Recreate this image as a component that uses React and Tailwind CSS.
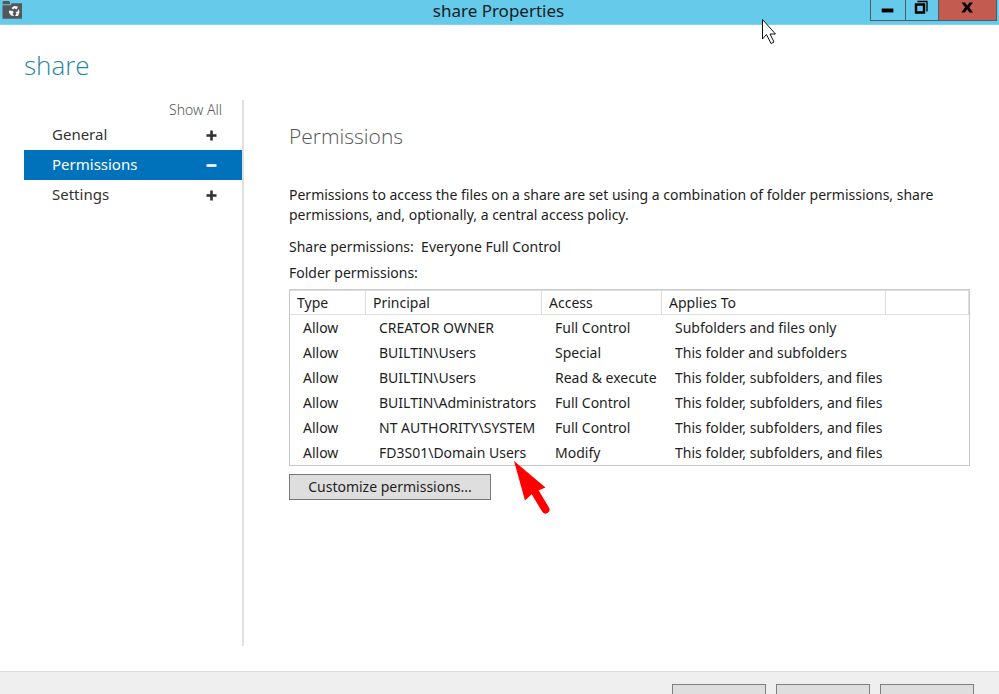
const sections = [
  { name: "General", open: false },
  { name: "Permissions", open: true },
  { name: "Settings", open: false },
];

const rows = [
  ["Allow", "CREATOR OWNER", "Full Control", "Subfolders and files only"],
  ["Allow", "BUILTIN\\Users", "Special", "This folder and subfolders"],
  ["Allow", "BUILTIN\\Users", "Read & execute", "This folder, subfolders, and files"],
  ["Allow", "BUILTIN\\Administrators", "Full Control", "This folder, subfolders, and files"],
  ["Allow", "NT AUTHORITY\\SYSTEM", "Full Control", "This folder, subfolders, and files"],
  ["Allow", "FD3S01\\Domain Users", "Modify", "This folder, subfolders, and files"],
];

function FolderIcon() {
  return (
    <svg width="20" height="19" viewBox="0 0 20 19" aria-hidden="true">
      <path d="M.5 2 1.500 1H7l1 1v2.200H.5z" fill="#55585b" />
      <path d="M.5 5.200h8L9.800 3.200H20v15.600H.5z" fill="#55585b" />
      <path d="m9.500 8 2.500-2 4 .5-1.500 3-2-1.300L11 9.500zM16.500 9l1 3-1.500 4h-3l1.500-2.500-1-1.500 2-.5zM7 10.500l4 .5.5 2-1 .3 1.500 2.700-3-.5L7 12.500z" fill="#f4f6f7" />
    </svg>
  );
}

function ToggleIcon({ open }) {
  return (
    <svg width="11" height="11" viewBox="0 0 11 11" fill="currentColor" aria-hidden="true">
      <path d="M.5 4.200h10v2.600H.5z" />
      {!open && <path d="M4.200.5h2.600v10H4.200z" />}
    </svg>
  );
}

function TitleBar() {
  return (
    <header className="grid h-[25px] shrink-0 grid-cols-[1fr_auto_1fr] items-start border-b border-[#83d4ee] bg-[#66caea] pr-[2px]">
      <div className="pl-[2px]">
        <FolderIcon />
      </div>
      <h1 className="text-[17px] leading-[22px] text-[#111c22]">share Properties</h1>
      <div className="flex h-[21px] justify-self-end border border-t-0 border-[#4a5f69]">
        <button type="button" aria-label="Minimize" className="flex w-[35px] justify-center border-r border-[#4a5f69]">
          <svg width="35" height="20" viewBox="0 0 35 20"><path d="M11 8.500h12v4H11z" fill="#000" /></svg>
        </button>
        <button type="button" aria-label="Restore" className="flex w-[33px] justify-center border-r border-[#4a5f69]">
          <svg width="32" height="20" viewBox="0 0 32 20" fill="none" stroke="#000">
            <path d="M10 4.500h8v8h-8z" strokeWidth="2.400" />
            <path d="M11.500 1.500h9.500V11.500" strokeWidth="1.300" />
          </svg>
        </button>
        <button type="button" aria-label="Close" className="flex w-[57px] justify-center bg-[#c45b50]">
          <svg width="57" height="20" viewBox="0 0 57 20"><path d="M22.500 2.500H26l2.200 3 2.300-3H34l-3.700 4.800L34 12.500h-3.600l-2.200-3.300-2.300 3.300h-3.600l3.800-5.200z" fill="#000" /></svg>
        </button>
      </div>
    </header>
  );
}

function Sidebar() {
  return (
    <nav className="flex w-[220px] shrink-0 flex-col border-r-2 border-[#e0e0e0]">
      <button type="button" className="mr-5 self-end text-sm leading-5 font-light text-[#555]">Show All</button>
      {sections.map((s) => (
        <button
          key={s.name}
          type="button"
          aria-expanded={s.open}
          className={
            s.open
              ? "flex h-[30px] items-center justify-between bg-[#0072bc] pr-[25px] pl-7 text-[15px] text-white"
              : "flex h-[30px] items-center justify-between pr-[25px] pl-7 text-[15px] text-[#333]"
          }
        >
          {s.name}
          <ToggleIcon open={s.open} />
        </button>
      ))}
    </nav>
  );
}

function PermissionsTable() {
  return (
    <div className="border border-[#c8c8c8]">
      <table className="w-full table-fixed border-separate border-spacing-0 text-left">
        <colgroup>
          <col className="w-[76px]" />
          <col className="w-[176px]" />
          <col className="w-[120px]" />
          <col className="w-[224px]" />
          <col />
        </colgroup>
        <thead>
          <tr className="h-[25px]">
            {["Type", "Principal", "Access", "Applies To", ""].map((h) => (
              <th key={h} className="border-t border-r border-b border-[#dedede] p-0 pl-[7px] font-normal">{h}</th>
            ))}
          </tr>
        </thead>
        <tbody>
          {rows.map((r, i) => (
            <tr key={i} className="h-[25px]">
              {r.map((c, j) => (
                <td key={j} className="p-0 pl-[13px] whitespace-nowrap">{c}</td>
              ))}
              <td />
            </tr>
          ))}
        </tbody>
      </table>
    </div>
  );
}

export default function App() {
  return (
    <div className="flex h-screen flex-col overflow-hidden bg-white font-['Noto_Sans','Open_Sans',sans-serif] text-sm text-[#1e1e1e]">
      <TitleBar />
      <main className="flex min-h-0 flex-1 flex-col pr-[29px] pb-[25px] pl-6">
        <h2 className="mt-5 mb-[15px] font-['Open_Sans',sans-serif] text-[26px] leading-10 font-light text-[#1f86a3]">share</h2>
        <div className="flex min-h-0 flex-1">
          <Sidebar />
          <section className="min-w-0 flex-1 pt-5 pl-[45px]">
            <h3 className="font-['Open_Sans',sans-serif] text-[21px] leading-8 font-light text-[#555]">Permissions</h3>
            <p className="mt-[33px] leading-5">
              Permissions to access the files on a share are set using a combination of folder permissions, share
              permissions, and, optionally, a central access policy.
            </p>
            <p className="mt-3 leading-5">Share permissions:&nbsp; Everyone Full Control</p>
            <p className="mt-[6px] mb-[6px] leading-5">Folder permissions:</p>
            <PermissionsTable />
            <button type="button" className="mt-2 h-[26px] w-[202px] border border-[#777] bg-[#dedede]">
              Customize permissions...
            </button>
          </section>
        </div>
      </main>
      <footer className="flex h-[23px] shrink-0 items-start justify-end gap-[10px] border-t border-[#dcdcdc] bg-[#efefef] pt-3 pr-[25px]">
        {["OK", "Cancel", "Apply"].map((l) => (
          <button key={l} type="button" aria-label={l} className="h-[27px] w-[94px] shrink-0 border border-[#808080] bg-[#dedede]" />
        ))}
      </footer>
      <svg className="pointer-events-none absolute top-[460px] left-[512px]" width="40" height="56" viewBox="0 0 40 56" aria-hidden="true">
        <path d="m2 1 31.500 26.500-12 5L13 40.500z" fill="#f00" />
        <path d="m23 32 10.500 17.500" stroke="#f00" strokeWidth="8" strokeLinecap="round" />
      </svg>
      <svg className="pointer-events-none absolute top-[18px] left-[761px]" width="17" height="28" viewBox="0 0 17 28" aria-hidden="true">
        <path d="M1.500 1.500v19.500l4-4.500 4.500 9 3-1.500-4-8h5.500z" fill="#fff" stroke="#111" />
      </svg>
    </div>
  );
}
